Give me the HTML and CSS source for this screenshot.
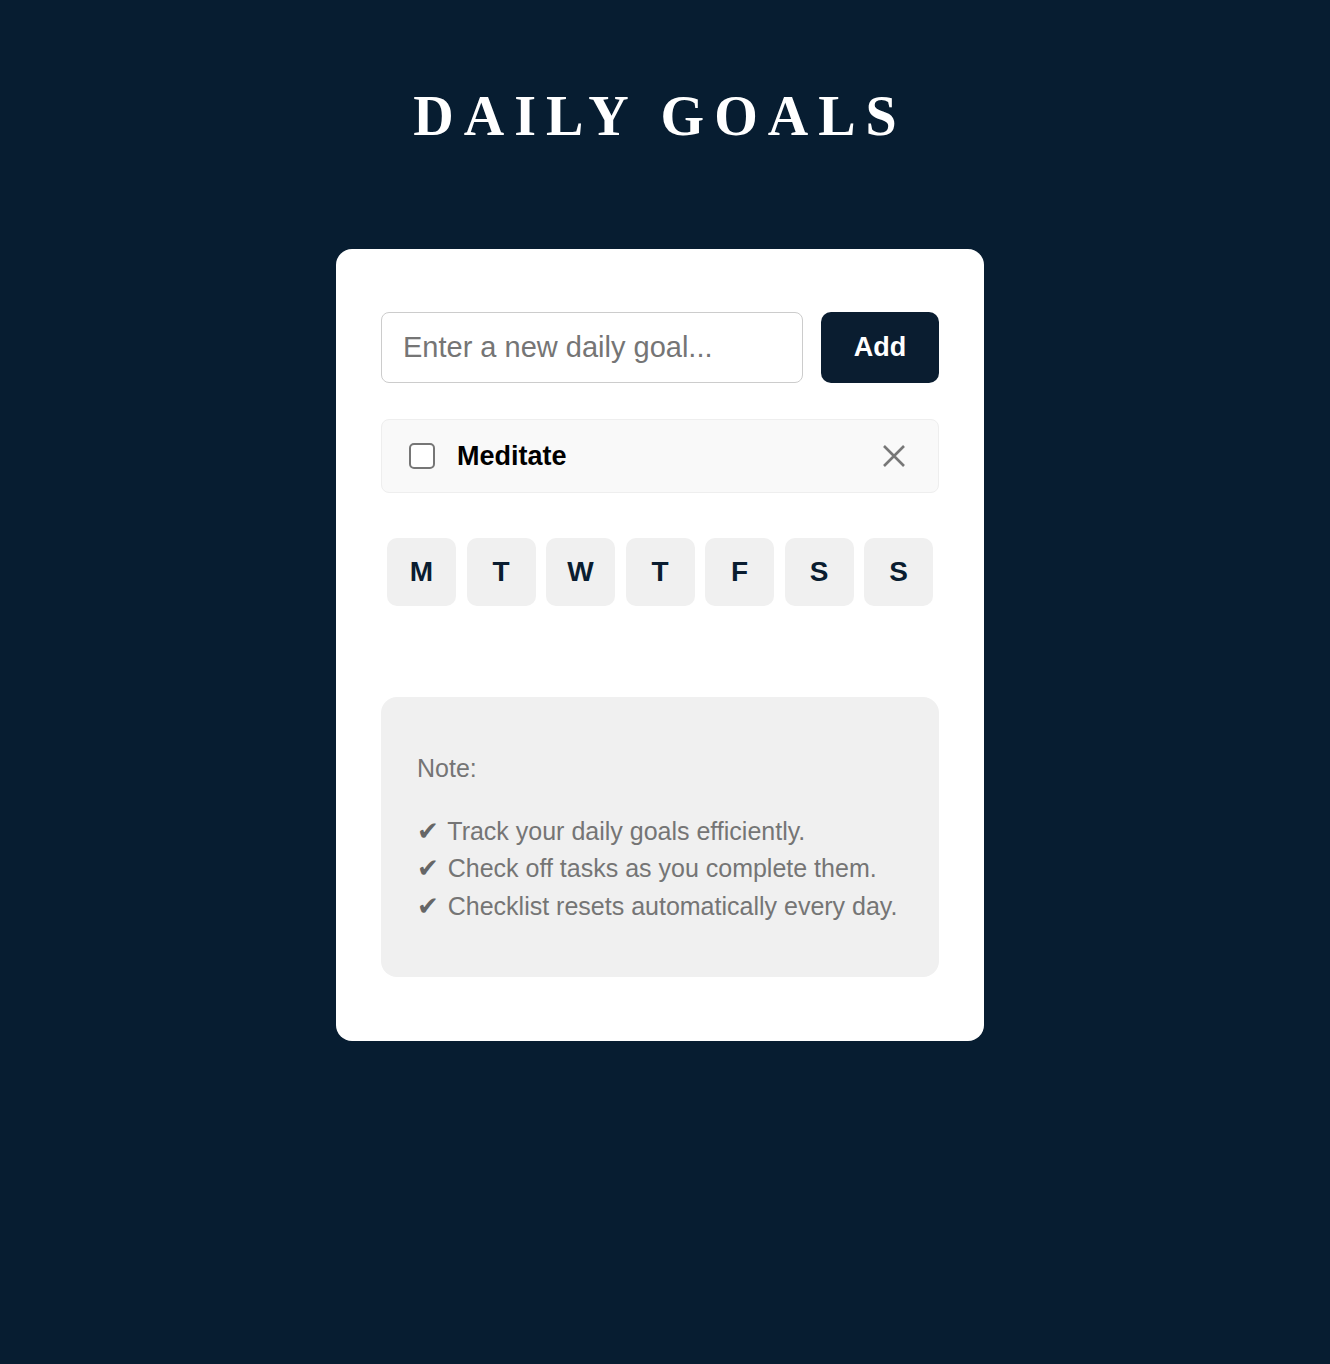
FILE: index.html
```html
<!DOCTYPE html>
<html lang="en">
<head>
    <meta charset="UTF-8">
    <meta name="viewport" content="width=device-width, initial-scale=1.0">
    <title>Daily Goals</title>
    <link rel="stylesheet" href="styles.css">
</head>
<body>
    <h1 class="title">Daily Goals</h1>
    <div class="card">
        <div class="add-row">
            <input type="text" class="goal-input" placeholder="Enter a new daily goal...">
            <button class="add-button">Add</button>
        </div>
        <ul class="goal-list">
            <li class="goal">
                <span class="goal-check"></span>
                <span class="goal-text">Meditate</span>
                <button class="goal-remove" aria-label="Remove">
                    <svg width="24" height="24" viewBox="0 0 24 24">
                        <path d="M2 2 L22 22 M22 2 L2 22" stroke="#777" stroke-width="2.6" fill="none"/>
                    </svg>
                </button>
            </li>
        </ul>
        <div class="days">
            <button class="day">M</button>
            <button class="day">T</button>
            <button class="day">W</button>
            <button class="day">T</button>
            <button class="day">F</button>
            <button class="day">S</button>
            <button class="day">S</button>
        </div>
        <div class="note">
            <p class="note-title">Note:</p>
            <p class="note-lines">
                <span class="tick">✔</span> Track your daily goals efficiently.<br>
                <span class="tick">✔</span> Check off tasks as you complete them.<br>
                <span class="tick">✔</span> Checklist resets automatically every day.
            </p>
        </div>
    </div>
</body>
</html>
```

FILE: styles.css
```css
body {
    margin: 0;
    padding: 83px 10px 80px 0;
    background-color: #071d31;
    font-family: "Liberation Sans", Arial, sans-serif;
}
.title {
    margin: 0 0 99px;
    text-align: center;
    color: #fff;
    font-family: "Liberation Serif", "Times New Roman", serif;
    font-size: 56px;
    line-height: 67px;
    font-weight: bold;
    letter-spacing: 10px;
    text-transform: uppercase;
}
.card {
    width: 558px;
    margin: 0 auto;
    padding: 63px 45px 64px;
    background-color: #fff;
    border-radius: 16px;
}
.add-row {
    display: flex;
    gap: 18px;
}
.goal-input {
    flex: 1;
    height: 71px;
    box-sizing: border-box;
    padding: 0 21px;
    border: 1px solid #ccc;
    border-radius: 8px;
    font-family: inherit;
    font-size: 29px;
    color: #333;
    outline: none;
}
.goal-input::placeholder {
    color: #757575;
}
.add-button {
    width: 118px;
    height: 71px;
    border: none;
    border-radius: 10px;
    background-color: #0a1d30;
    color: #fff;
    font-family: inherit;
    font-size: 27px;
    font-weight: bold;
    cursor: pointer;
}
.goal-list {
    list-style: none;
    margin: 36px 0 0;
    padding: 0;
}
.goal {
    display: flex;
    align-items: center;
    height: 74px;
    box-sizing: border-box;
    padding: 0 32px 0 27px;
    background-color: #f9f9f9;
    border: 1px solid #eee;
    border-radius: 8px;
}
.goal-check {
    width: 26px;
    height: 26px;
    box-sizing: border-box;
    border: 2px solid #767676;
    border-radius: 5px;
    background-color: #fff;
}
.goal-text {
    flex: 1;
    margin-left: 22px;
    font-size: 27px;
    font-weight: bold;
    color: #000;
}
.goal-remove {
    display: flex;
    padding: 0;
    border: none;
    background: none;
    cursor: pointer;
}
.days {
    display: flex;
    justify-content: center;
    gap: 10.5px;
    margin-top: 45px;
}
.day {
    width: 69px;
    height: 68px;
    border: none;
    border-radius: 10px;
    background-color: #f0f0f0;
    color: #0a1d30;
    font-family: inherit;
    font-size: 28px;
    font-weight: bold;
    cursor: pointer;
}
.note {
    margin-top: 91px;
    padding: 53px 36px 52px;
    background-color: #f0f0f0;
    border-radius: 16px;
    color: #757575;
    font-size: 25px;
    line-height: 37.5px;
}
.note p {
    margin: 0;
}
.note-title {
    margin-bottom: 25px !important;
}
.tick {
    font-family: "DejaVu Sans", sans-serif;
    font-size: 26px;
    margin-right: 2px;
    color: #666;
}
```
